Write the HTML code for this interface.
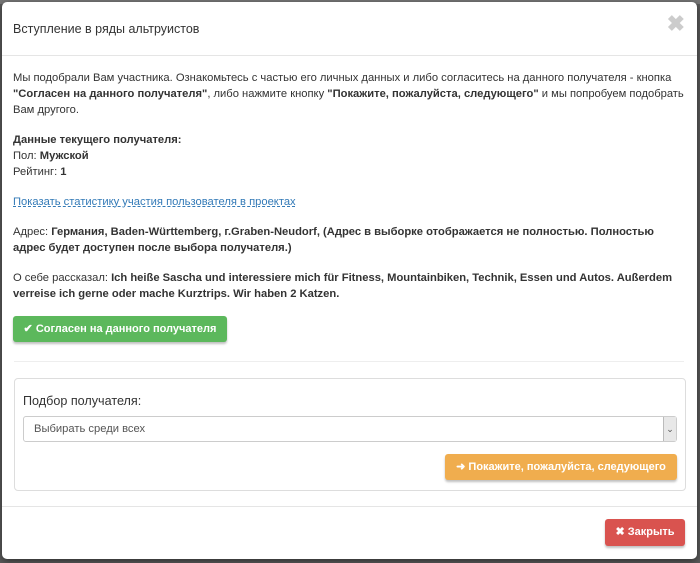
<!DOCTYPE html>
<html><head><meta charset="utf-8"><style>
body{margin:0;width:700px;height:563px;background:#5a5a5a;font-family:"Liberation Sans",Arial,sans-serif;font-size:11.2px;color:#333;position:relative;overflow:hidden}
.top{position:absolute;left:0;top:0;width:700px;height:4px;background:#777}
.modal{position:absolute;left:2px;top:2px;width:695px;height:557px;background:#fff;border-radius:5px;box-shadow:0 2px 8px rgba(0,0,0,.5)}
.hdr{height:53px;border-bottom:1px solid #e5e5e5;position:relative}
.hdr h4{margin:0;position:absolute;left:11px;top:20px;font-size:12.5px;font-weight:normal}
.x{position:absolute;right:12px;top:9px;font-size:22px;font-weight:bold;color:#ccc}
p{margin:0;line-height:16px}
.b{position:absolute;left:11px;width:672px}
a{color:#337ab7;text-decoration:underline dashed}
.btn{position:absolute;color:#fff;font-weight:bold;border-radius:3px;font-size:11px;text-align:center;box-shadow:0 2px 2px rgba(0,0,0,.25);white-space:nowrap}
</style></head><body>
<div class="top"></div>
<div class="modal">
<div class="hdr"><h4>Вступление в ряды альтруистов</h4><div class="x">✖</div></div>
<div class="b" style="top:68px"><p>Мы подобрали Вам участника. Ознакомьтесь с частью его личных данных и либо согласитесь на данного получателя - кнопка <b>"Согласен на данного получателя"</b>, либо нажмите кнопку <b>"Покажите, пожалуйста, следующего"</b> и мы попробуем подобрать Вам другого.</p></div>
<div class="b" style="top:130px"><p><b>Данные текущего получателя:</b><br>Пол: <b>Мужской</b><br>Рейтинг: <b>1</b></p></div>
<div class="b" style="top:192px"><p><a>Показать статистику участия пользователя в проектах</a></p></div>
<div class="b" style="top:222px"><p>Адрес: <b>Германия, Baden-Württemberg, г.Graben-Neudorf, (Адрес в выборке отображается не полностью. Полностью адрес будет доступен после выбора получателя.)</b></p></div>
<div class="b" style="top:268px"><p>О себе рассказал: <b>Ich heiße Sascha und interessiere mich für Fitness, Mountainbiken, Technik, Essen und Autos. Außerdem verreise ich gerne oder mache Kurztrips. Wir haben 2 Katzen.</b></p></div>
<div class="btn" style="left:11px;top:314px;width:214px;height:26px;line-height:26px;background:#5cb85c">✔ Согласен на данного получателя</div>
<div style="position:absolute;left:12px;top:359px;width:670px;border-top:1px solid #eee"></div>
<div style="position:absolute;left:12px;top:376px;width:670px;height:111px;border:1px solid #ddd;border-radius:4px">
<div style="position:absolute;left:8px;top:15px;font-size:12.6px">Подбор получателя:</div>
<div style="position:absolute;left:8px;top:37px;height:24px;border:1px solid #ccc;border-radius:3px;line-height:24px;padding-left:10px;width:642px;color:#555">Выбирать среди всех<div style="position:absolute;right:0;top:0;width:12px;height:24px;background:#e8e8e8;border-left:1px solid #bbb;font-size:9px;text-align:center">⌄</div></div>
<div class="btn" style="right:8px;top:75px;width:232px;height:26px;line-height:26px;background:#f0ad4e">➜ Покажите, пожалуйста, следующего</div>
</div>
<div style="position:absolute;left:0;top:504px;width:695px;border-top:1px solid #e5e5e5"></div>
<div class="btn" style="left:603px;top:517px;width:80px;height:27px;line-height:27px;background:#d9534f">✖ Закрыть</div>
</div>
</body></html>
